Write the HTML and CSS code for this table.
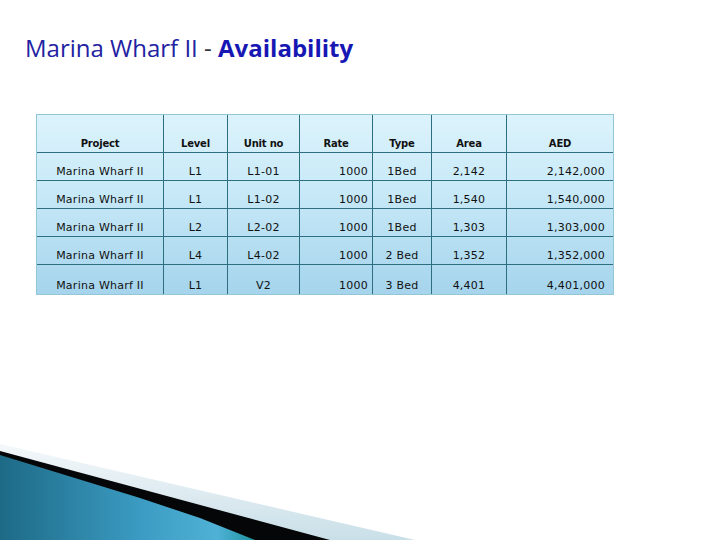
FILE: index.html
```html
<!DOCTYPE html>
<html>
<head>
<meta charset="utf-8">
<link rel="stylesheet" href="styles.css">
</head>
<body>
<div class="slide">
  <h1 class="title"><span class="t-reg">Marina Wharf II</span><span class="t-dash"> - </span><span class="t-bold">Availability</span></h1>
  <table class="grid">
    <colgroup>
      <col class="c-project"><col class="c-level"><col class="c-unit"><col class="c-rate"><col class="c-type"><col class="c-area"><col class="c-aed">
    </colgroup>
    <thead>
      <tr><th>Project</th><th>Level</th><th>Unit no</th><th>Rate</th><th>Type</th><th>Area</th><th>AED</th></tr>
    </thead>
    <tbody>
      <tr><td>Marina Wharf II</td><td>L1</td><td>L1-01</td><td class="r">1000</td><td>1Bed</td><td>2,142</td><td class="r2">2,142,000</td></tr>
      <tr><td>Marina Wharf II</td><td>L1</td><td>L1-02</td><td class="r">1000</td><td>1Bed</td><td>1,540</td><td class="r2">1,540,000</td></tr>
      <tr><td>Marina Wharf II</td><td>L2</td><td>L2-02</td><td class="r">1000</td><td>1Bed</td><td>1,303</td><td class="r2">1,303,000</td></tr>
      <tr><td>Marina Wharf II</td><td>L4</td><td>L4-02</td><td class="r">1000</td><td>2 Bed</td><td>1,352</td><td class="r2">1,352,000</td></tr>
      <tr class="last"><td>Marina Wharf II</td><td>L1</td><td>V2</td><td class="r">1000</td><td>3 Bed</td><td>4,401</td><td class="r2">4,401,000</td></tr>
    </tbody>
  </table>
  <svg class="swoosh" width="720" height="100" viewBox="0 440 720 100" xmlns="http://www.w3.org/2000/svg">
    <defs>
      <linearGradient id="pale" x1="0" y1="0" x2="0" y2="1">
        <stop offset="0" stop-color="#f4f8fa"/>
        <stop offset="1" stop-color="#c9dfe8"/>
      </linearGradient>
      <linearGradient id="blue" x1="0" y1="0" x2="1" y2="0">
        <stop offset="0" stop-color="#1d6a86"/>
        <stop offset="0.55" stop-color="#3b9bc2"/>
        <stop offset="0.85" stop-color="#50b1d6"/>
        <stop offset="1" stop-color="#1c93a0"/>
      </linearGradient>
    </defs>
    <polygon points="0,444 415,540 0,540" fill="url(#pale)"/>
    <polygon points="0,451 330,540 0,540" fill="#050607"/>
    <polygon points="0,455 140,498 200,518 255,540 0,540" fill="url(#blue)"/>
  </svg>
</div>
</body>
</html>
```

FILE: styles.css
```css
html, body {
  margin: 0;
  padding: 0;
  background: #ffffff;
}

.slide {
  position: relative;
  width: 720px;
  height: 540px;
  overflow: hidden;
  background: #ffffff;
}

.title {
  margin: 0;
  padding: 33px 0 0 25px;
  font-family: "Open Sans", "DejaVu Sans", sans-serif;
  font-size: 24px;
  font-weight: normal;
  line-height: 30px;
  white-space: nowrap;
}

.t-reg {
  color: #2222a2;
}

.t-dash {
  color: #333340;
}

.t-bold {
  color: #1717b4;
  font-weight: bold;
}

.grid {
  margin: 51px 0 0 36px;
  border-collapse: separate;
  border-spacing: 0;
  border: 1px solid #93c7d6;
  background: linear-gradient(#dcf3fc 0%, #c9eaf8 40%, #a5d4ec 100%);
  font-family: "DejaVu Sans", sans-serif;
  font-size: 11px;
  color: #111;
  table-layout: fixed;
  width: 577px;
}

.c-project { width: 127px; }
.c-level { width: 64px; }
.c-unit { width: 72px; }
.c-rate { width: 73px; }
.c-type { width: 59px; }
.c-area { width: 75px; }
.c-aed { width: 106px; }

.grid th,
.grid td {
  padding: 0 0 2px 0;
  text-align: center;
  vertical-align: bottom;
  border-right: 1px solid #2d6f80;
  border-bottom: 1px solid #2d6f80;
  white-space: nowrap;
  letter-spacing: 0.25px;
  line-height: 13px;
}

.grid th:last-child,
.grid td:last-child {
  border-right: none;
}

.grid tbody tr:last-child td {
  border-bottom: none;
}

.grid th {
  height: 35px;
  font-size: 10px;
  font-weight: bold;
  letter-spacing: -0.2px;
}

.grid td {
  height: 25px;
}

.grid tr.last td {
  height: 27px;
}

.grid td.r {
  text-align: right;
  padding-right: 4px;
}

.grid td.r2 {
  text-align: right;
  padding-right: 8px;
}

.swoosh {
  position: absolute;
  left: 0;
  bottom: 0;
  display: block;
}
```
